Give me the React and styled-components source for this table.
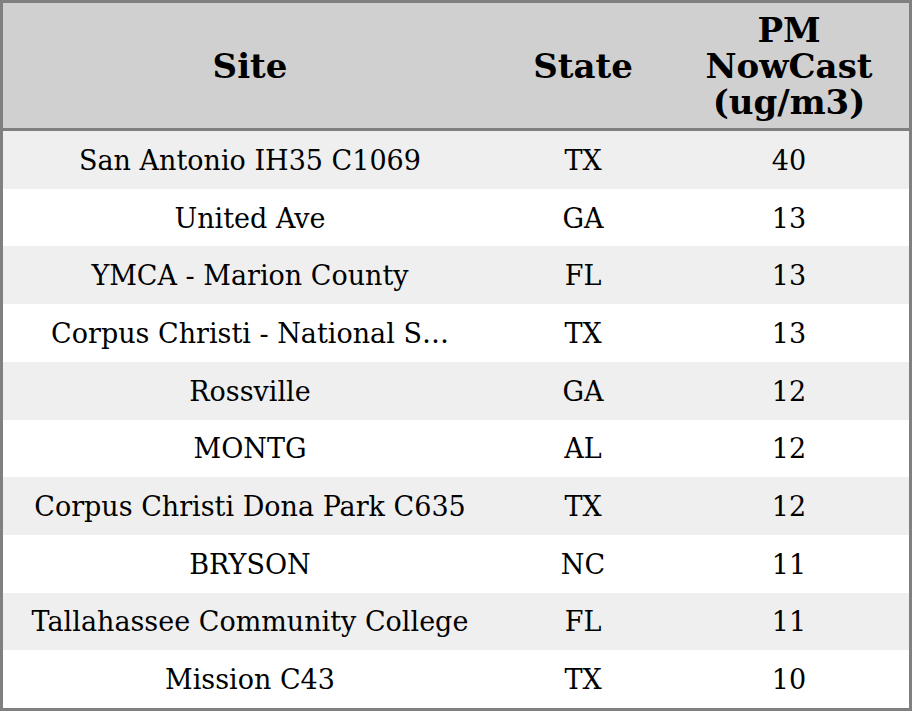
import styled, { createGlobalStyle } from 'styled-components';

const GlobalStyle = createGlobalStyle`
  html, body {
    margin: 0;
    padding: 0;
    background: #ffffff;
  }
  * {
    box-sizing: border-box;
  }
`;

const sites = [
  { site: 'San Antonio IH35 C1069', state: 'TX', value: 40 },
  { site: 'United Ave', state: 'GA', value: 13 },
  { site: 'YMCA - Marion County', state: 'FL', value: 13 },
  { site: 'Corpus Christi - National Seashore', state: 'TX', value: 13 },
  { site: 'Rossville', state: 'GA', value: 12 },
  { site: 'MONTG', state: 'AL', value: 12 },
  { site: 'Corpus Christi Dona Park C635', state: 'TX', value: 12 },
  { site: 'BRYSON', state: 'NC', value: 11 },
  { site: 'Tallahassee Community College', state: 'FL', value: 11 },
  { site: 'Mission C43', state: 'TX', value: 10 },
];

// long site names get cut to 27 chars + ellipsis
const truncate = (text, max = 30) => (text.length > max ? text.slice(0, 27) + '…' : text);

const App = () => {
  return (
    <>
      <GlobalStyle />
      <Table>
        <HeaderRow>
          <HeaderCell>Site</HeaderCell>
          <HeaderCell>State</HeaderCell>
          <HeaderCell>
            PM
            <br />
            NowCast
            <br />
            (ug/m3)
          </HeaderCell>
        </HeaderRow>
        <Body>
          {sites.map((row, i) => (
            <Row key={row.site} $striped={i % 2 === 0}>
              <Cell>{truncate(row.site)}</Cell>
              <Cell>{row.state}</Cell>
              <Cell>{row.value}</Cell>
            </Row>
          ))}
        </Body>
      </Table>
    </>
  );
};

export default App;

const columns = '494px 172px 1fr';

const Table = styled.div`
  width: 912px;
  height: 711px;
  border: 3px solid #808080;
  display: flex;
  flex-direction: column;
  font-family: 'DejaVu Serif', serif;
  color: #000000;
  overflow: hidden;
`;

const HeaderRow = styled.div`
  display: grid;
  grid-template-columns: ${columns};
  height: 128px;
  background-color: #d0d0d0;
  border-bottom: 3px solid #808080;
`;

const HeaderCell = styled.div`
  display: flex;
  align-items: center;
  justify-content: center;
  text-align: center;
  font-weight: bold;
  font-size: 34px;
  line-height: 36px;
`;

const Body = styled.div`
  flex: 1;
  display: flex;
  flex-direction: column;
`;

const Row = styled.div`
  flex: 1;
  display: grid;
  grid-template-columns: ${columns};
  align-items: center;
  padding-top: 1px;
  background-color: ${({ $striped }) => ($striped ? '#efefef' : '#ffffff')};
`;

const Cell = styled.div`
  text-align: center;
  font-size: 27px;
  white-space: nowrap;
`;
